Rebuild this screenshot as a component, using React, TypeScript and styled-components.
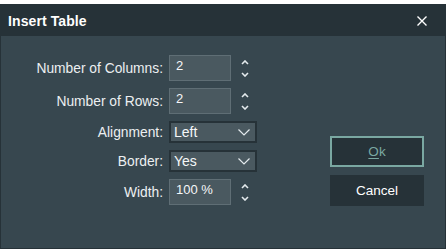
import React from 'react';
import styled, { createGlobalStyle } from 'styled-components';

const GlobalStyle = createGlobalStyle`
  html, body {
    margin: 0;
    padding: 0;
    background: #ffffff;
  }
  body {
    font-family: "Liberation Sans", Arial, sans-serif;
  }
`;

const Page = styled.div`
  padding-top: 4px;
  width: 446px;
`;

const Dialog = styled.div`
  width: 446px;
  height: 245px;
  box-sizing: border-box;
  border: 1px solid #263238;
  background: #37474f;
  display: flex;
  flex-direction: column;
`;

const TitleBar = styled.div`
  height: 31px;
  background: #263238;
  display: flex;
  align-items: center;
  justify-content: space-between;
  padding: 0 18px 0 7px;
  flex-shrink: 0;
`;

const Title = styled.div`
  color: #ffffff;
  font-size: 14px;
  font-weight: 700;
  letter-spacing: 0.1px;
`;

const CloseButton = styled.button`
  width: 10px;
  height: 10px;
  padding: 0;
  border: none;
  background: none;
  display: flex;
  cursor: pointer;
`;

const Body = styled.div`
  flex: 1;
  display: flex;
  align-items: flex-start;
  padding: 19px 21px 0 7px;
`;

const Form = styled.div`
  display: grid;
  grid-template-rows: 26px 26px 22px 22px 26px;
  row-gap: 7px;
`;

const Row = styled.div`
  display: flex;
  align-items: center;
`;

const Label = styled.label`
  width: 161px;
  padding-right: 6px;
  box-sizing: border-box;
  text-align: right;
  color: #eceff1;
  font-size: 13.8px;
  white-space: nowrap;
`;

const NumberBox = styled.div`
  width: 62px;
  height: 26px;
  box-sizing: border-box;
  background: #4a5960;
  border: 1px solid #5f6e75;
  color: #f5f7f8;
  font-size: 13px;
  line-height: 16px;
  padding: 2px 6px;
`;

const Spinner = styled.div`
  display: flex;
  flex-direction: column;
  margin-left: 8px;
  width: 12px;
  height: 26px;
  justify-content: center;
  gap: 4px;
`;

const SpinButton = styled.button`
  width: 12px;
  height: 8px;
  padding: 0;
  border: none;
  background: none;
  display: flex;
  align-items: center;
  justify-content: center;
  cursor: pointer;
`;

const Select = styled.div`
  width: 88px;
  height: 22px;
  box-sizing: border-box;
  background: #4a5960;
  border: 2px solid #263238;
  color: #f5f7f8;
  font-size: 14px;
  display: flex;
  align-items: center;
  justify-content: space-between;
  padding: 0 5px 0 3px;
`;

const Buttons = styled.div`
  margin-left: auto;
  margin-top: 81px;
  display: flex;
  flex-direction: column;
  gap: 8px;
`;

const DialogButton = styled.button<{ $primary?: boolean }>`
  width: 94px;
  height: 31px;
  box-sizing: border-box;
  background: #263238;
  border: ${(p) => (p.$primary ? '2px solid #7aa8a2' : 'none')};
  color: ${(p) => (p.$primary ? '#7aa8a2' : '#ffffff')};
  font-family: "Liberation Sans", Arial, sans-serif;
  font-size: 13.5px;
  padding: 0;
  cursor: pointer;

  u {
    text-underline-offset: 2px;
  }
`;

const Chevron = ({ up }: { up?: boolean }) => (
  <svg width="8" height="5" viewBox="0 0 8 5">
    <path
      d={up ? 'M1 4 L4 1 L7 4' : 'M1 1 L4 4 L7 1'}
      fill="none"
      stroke="#e4eaed"
      strokeWidth="1.6"
    />
  </svg>
);

const NumberField = ({ label, value }: { label: string; value: string }) => (
  <Row>
    <Label>{label}</Label>
    <NumberBox>{value}</NumberBox>
    <Spinner>
      <SpinButton>
        <Chevron up />
      </SpinButton>
      <SpinButton>
        <Chevron />
      </SpinButton>
    </Spinner>
  </Row>
);

const SelectField = ({ label, value }: { label: string; value: string }) => (
  <Row>
    <Label>{label}</Label>
    <Select>
      <span>{value}</span>
      <svg width="12" height="7" viewBox="0 0 12 7">
        <path d="M0.5 0.5 L6 6 L11.5 0.5" fill="none" stroke="#e4eaed" strokeWidth="1.2" />
      </svg>
    </Select>
  </Row>
);

export default function App() {
  return (
    <Page>
      <GlobalStyle />
      <Dialog>
        <TitleBar>
          <Title>Insert Table</Title>
          <CloseButton>
            <svg width="10" height="10" viewBox="0 0 10 10">
              <path d="M0.5 0.5 L9.5 9.5 M9.5 0.5 L0.5 9.5" stroke="#ffffff" strokeWidth="1.4" />
            </svg>
          </CloseButton>
        </TitleBar>
        <Body>
          <Form>
            <NumberField label="Number of Columns:" value="2" />
            <NumberField label="Number of Rows:" value="2" />
            <SelectField label="Alignment:" value="Left" />
            <SelectField label="Border:" value="Yes" />
            <NumberField label="Width:" value="100 %" />
          </Form>
          <Buttons>
            <DialogButton $primary>
              <u>O</u>k
            </DialogButton>
            <DialogButton>Cancel</DialogButton>
          </Buttons>
        </Body>
      </Dialog>
    </Page>
  );
}
